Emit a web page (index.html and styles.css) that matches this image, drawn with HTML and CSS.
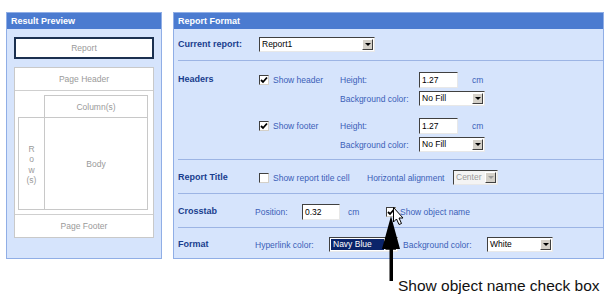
FILE: index.html
```html
<html>
<head>
<meta http-equiv="Content-Type" content="text/html; charset=UTF-8">
<title>Report Format</title>
<link rel="stylesheet" href="styles.css">
</head>
<body>
<div class="screen">

  <div class="panel preview">
    <div class="panel-head">Result Preview</div>
    <div class="preview-body">
      <div class="report-box">Report</div>
      <div class="layout-box">
        <div class="band">Page Header</div>
        <div class="crosstab">
          <div class="corner"></div>
          <div class="cols">Column(s)</div>
          <div class="rows">R<br>o<br>w<br>(s)</div>
          <div class="body-cell">Body</div>
        </div>
        <div class="band footer">Page Footer</div>
      </div>
    </div>
  </div>

  <div class="panel format">
    <div class="panel-head">Report Format</div>

    <div class="section current">
      <div class="sec-label">Current report:</div>
      <div class="select w-report"><span>Report1</span><i class="btn"></i></div>
    </div>

    <div class="section headers">
      <div class="sec-label">Headers</div>
      <div class="pairs">
        <div class="pair">
          <div class="check"><span class="cb on"><svg width="8" height="8" viewBox="0 0 8 8"><polyline points="1,4 3,6 7,1.5" /></svg></span>Show header</div>
          <div class="flabel">Height:</div>
          <div class="field"><div class="input w-height">1.27</div><span class="unit">cm</span></div>
          <div></div>
          <div class="flabel">Background color:</div>
          <div class="field"><div class="select w-fill"><span>No Fill</span><i class="btn"></i></div></div>
        </div>
        <div class="pair">
          <div class="check"><span class="cb on"><svg width="8" height="8" viewBox="0 0 8 8"><polyline points="1,4 3,6 7,1.5" /></svg></span>Show footer</div>
          <div class="flabel">Height:</div>
          <div class="field"><div class="input w-height">1.27</div><span class="unit">cm</span></div>
          <div></div>
          <div class="flabel">Background color:</div>
          <div class="field"><div class="select w-fill"><span>No Fill</span><i class="btn"></i></div></div>
        </div>
      </div>
    </div>

    <div class="section title">
      <div class="sec-label">Report Title</div>
      <div class="check w-title"><span class="cb"></span>Show report title cell</div>
      <div class="flabel w-align">Horizontal alignment</div>
      <div class="select w-center disabled"><span>Center</span><i class="btn"></i></div>
    </div>

    <div class="section crosstab-sec">
      <div class="sec-label">Crosstab</div>
      <div class="flabel w-pos">Position:</div>
      <div class="input w-offset">0.32</div>
      <span class="unit w-cm">cm</span>
      <div class="check"><span class="cb on"><svg width="8" height="8" viewBox="0 0 8 8"><polyline points="1,4 3,6 7,1.5" /></svg></span>Show object name</div>
    </div>

    <div class="section last">
      <div class="sec-label">Format</div>
      <div class="flabel w-link">Hyperlink color:</div>
      <div class="select w-navy navy"><span>Navy Blue</span><i class="btn"></i></div>
      <div class="flabel w-bg">Background color:</div>
      <div class="select w-white"><span>White</span><i class="btn"></i></div>
    </div>
  </div>

  <svg class="overlay" width="613" height="301" viewBox="0 0 613 301">
    <path class="cursor" d="M393.5 207.5 L393.5 222 L396.5 219 L399 224.5 L401.5 223.5 L399 218 L403 218 Z" />
    <polygon points="391,216 382,249 400,249" />
    <rect x="389.5" y="248" width="3.5" height="33" />
  </svg>
  <div class="caption">Show object name check box</div>
</div>
</body>
</html>
```

FILE: styles.css
```css
body {
	margin: 0;
	background: #fff;
	font-family: "Liberation Sans", Arial, sans-serif;
}
.screen {
	position: relative;
	display: flex;
	gap: 11px;
	height: 301px;
	padding: 12px 0 0 6px;
	box-sizing: border-box;
}

/* panels */
.panel {
	height: 247px;
	background: #d6e4fc;
	border: 1px solid #90aee6;
	box-sizing: border-box;
}
.preview {
	width: 156px;
}
.format {
	width: 431px;
	display: flex;
	flex-direction: column;
}
.panel-head {
	height: 16px;
	line-height: 16px;
	padding-left: 4px;
	background: #4b7bd0;
	color: #fff;
	font-size: 9px;
	font-weight: bold;
}

/* result preview */
.preview-body {
	padding: 8px 7px 0 7px;
	font-size: 8.5px;
	color: #9a9a9a;
	text-align: center;
}
.report-box {
	height: 22px;
	line-height: 18px;
	background: #fff;
	border: 2px solid #1b3050;
	box-sizing: border-box;
}
.layout-box {
	margin-top: 8px;
	background: #fff;
	border: 1px solid #c9c9c9;
}
.band {
	height: 22px;
	line-height: 22px;
	border-bottom: 1px solid #cfcfcf;
}
.band.footer {
	border-bottom: none;
	border-top: 1px solid #cfcfcf;
}
.crosstab {
	display: grid;
	grid-template-columns: 26px 104px;
	grid-template-rows: 22px 93px;
	padding: 4px 5px 4px 3px;
}
.crosstab > div {
	box-sizing: border-box;
	display: flex;
	align-items: center;
	justify-content: center;
}
.cols {
	border: 1px solid #c8c8c8;
	border-bottom: none;
}
.rows {
	border: 1px solid #c8c8c8;
	border-right: none;
	line-height: 10.5px;
	padding-top: 2px;
}
.body-cell {
	border: 1px solid #c8c8c8;
}

/* report format */
.section {
	display: flex;
	align-items: center;
	margin-left: 4px;
	border-bottom: 1px solid #9cb4e4;
	font-size: 8.5px;
	color: #3a60b8;
}
.section.current {
	padding: 8px 0 8px;
}
.section.headers {
	align-items: flex-start;
	padding: 9px 0 5px;
}
.section.title {
	padding: 8px 0 6px;
}
.section.crosstab-sec {
	padding: 8px 0 6px;
}
.section.last {
	border-bottom: none;
	padding: 7px 0 0;
}
.sec-label {
	width: 77px;
	flex: none;
	line-height: 19px;
	font-size: 9px;
	font-weight: bold;
	color: #193d8e;
}
.section.current .sec-label {
	line-height: 15px;
}
.pairs {
	display: flex;
	flex-direction: column;
	gap: 8px;
}
.pair {
	display: grid;
	grid-template-columns: 85px 79px 120px;
	grid-auto-rows: 19px;
	align-items: center;
}
.check {
	display: flex;
	align-items: center;
	gap: 4px;
}
.w-title { width: 112px; }
.flabel { white-space: nowrap; }
.w-align { width: 86px; }
.w-pos { width: 47px; }
.w-link { width: 74px; }
.w-bg { width: 84px; margin-left: 5px; }
.field {
	display: flex;
	align-items: center;
}
.unit {
	margin-left: 14px;
}
.w-cm {
	width: 38px;
	margin-left: 8px;
}

/* controls */
.cb {
	width: 10px;
	height: 10px;
	margin-left: 4px;
	background: #fff;
	border: 1px solid;
	border-color: #404040 #d4d0c8 #d4d0c8 #404040;
	box-sizing: border-box;
	display: flex;
	align-items: center;
	justify-content: center;
}
.cb svg polyline {
	fill: none;
	stroke: #000;
	stroke-width: 1.8;
}
.crosstab-sec .check .cb {
	margin-left: 0;
}
.select, .input {
	height: 15px;
	background: #fff;
	border: 1px solid;
	border-color: #404040 #e8e8e8 #e8e8e8 #404040;
	box-sizing: border-box;
	color: #000;
	font-size: 8.5px;
	line-height: 13px;
	display: flex;
}
.input {
	height: 16px;
	line-height: 14px;
	padding-left: 2px;
}
.select span {
	flex: 1;
	padding-left: 2px;
}
.btn {
	width: 11px;
	margin: 1px;
	background: #d4d0c8;
	border: 1px solid;
	border-color: #fff #404040 #404040 #fff;
	box-sizing: border-box;
	display: flex;
	align-items: center;
	justify-content: center;
}
.btn::after {
	content: "";
	border-left: 3px solid transparent;
	border-right: 3px solid transparent;
	border-top: 3px solid #000;
}
.w-report { width: 116px; margin-left: 4px; }
.w-fill { width: 66px; }
.w-height { width: 39px; }
.w-offset { width: 38px; }
.w-center { width: 45px; }
.w-navy { width: 69px; }
.w-white { width: 66px; }
.select.disabled {
	background: #f4f4f4;
	color: #9a9a9a;
}
.select.disabled .btn::after {
	border-top-color: #9a9a9a;
}
.select.navy span {
	background: #0a246a;
	color: #fff;
	margin: 1px 0 1px 1px;
	line-height: 11px;
}

/* annotation */
.overlay {
	position: absolute;
	left: 0;
	top: 0;
	pointer-events: none;
}
.overlay .cursor {
	fill: #fff;
	stroke: #000;
	stroke-width: 1;
}
.caption {
	position: absolute;
	left: 398px;
	top: 277px;
	font-size: 15.5px;
	line-height: 18px;
	color: #111;
}
```
